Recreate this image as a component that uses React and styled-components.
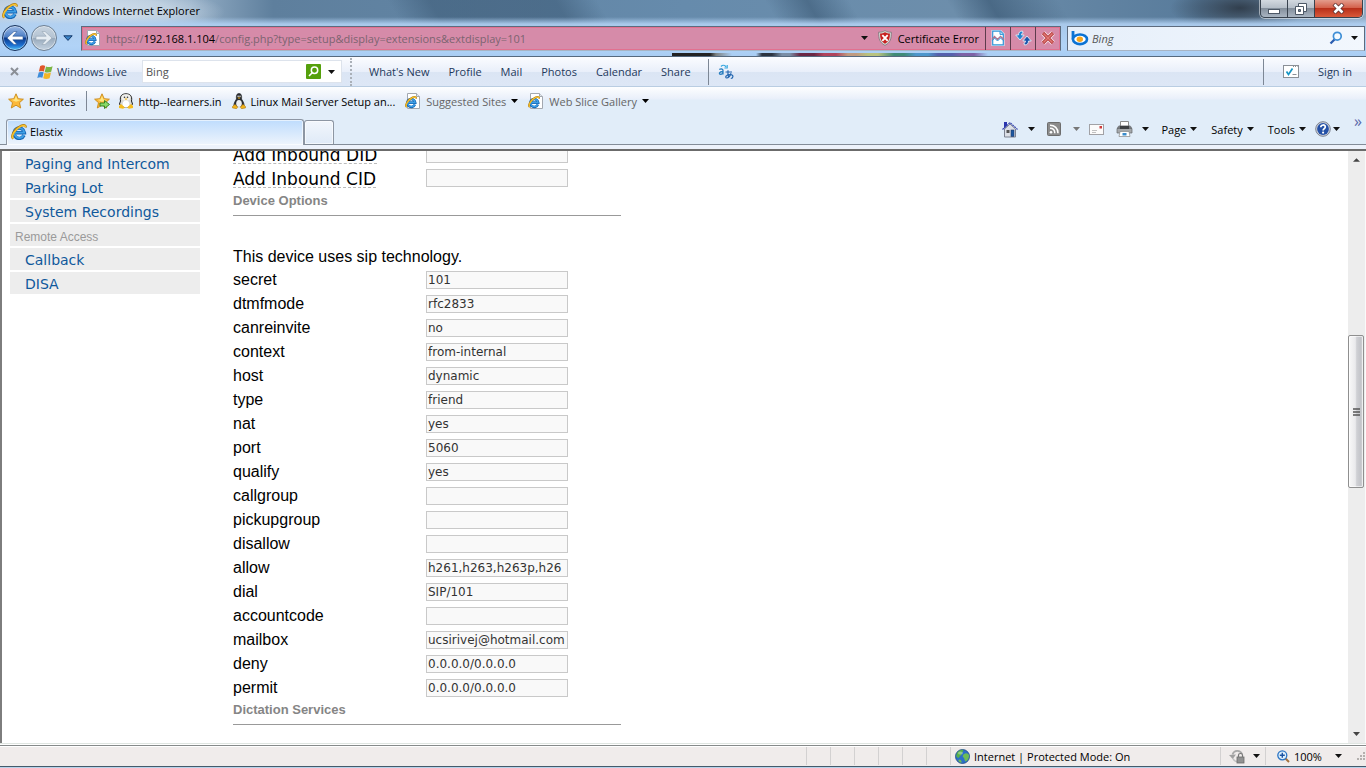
import React from "react";
import styled, { createGlobalStyle, css } from "styled-components";

const ui = '"Open Sans", "Noto Sans", sans-serif';
const verdana = '"DejaVu Sans", Verdana, sans-serif';
const arial = '"Liberation Sans", Arial, sans-serif';

const GlobalStyle = createGlobalStyle`
  *, *::before, *::after { box-sizing: border-box; }
  html, body { margin: 0; padding: 0; }
  body { background: #fff; font-family: ${ui}; font-size: 11px; color: #000; }
  button, input { font: inherit; color: inherit; }
  a { color: inherit; text-decoration: none; }
  svg { display: block; flex: none; }
`;

const Window = styled.div`
  display: flex;
  flex-direction: column;
  height: 100vh;
  overflow: hidden;
  white-space: nowrap;
`;

/* ---------- window frame ---------- */

const Glass = styled.header`
  flex: none;
  height: 57px;
  border-bottom: 1px solid #56697e;
  background:
    linear-gradient(90deg, #222 0 38px, #7c8080 44px, transparent 60px 84px, #2c3440 90px 100px, #7a8ea6 110px 118px, #6b2744 128px 142px, #b0435c 152px 164px, #c09a80 176px 184px, #b8c27e 196px 206px, #3f8a76 222px 232px, #4d96cc 244px 256px, #5560ac 266px 280px, #7d62a6 290px 302px, transparent 316px) 672px 53px / 320px 3px no-repeat,
    linear-gradient(180deg, rgba(176, 208, 242, 0) 0 17px, rgba(176, 208, 242, 0.9) 24px, #b1d3f7 46px, #a9cdf3 56px),
    radial-gradient(ellipse 130px 26px at 95px 12px, rgba(215, 228, 240, 0.95), rgba(215, 228, 240, 0.6) 60%, transparent),
    radial-gradient(ellipse 70px 24px at 1240px 8px, rgba(40, 50, 62, 0.85), transparent),
    linear-gradient(60deg, transparent 0 30%, rgba(58, 88, 116, 0.55) 33% 42%, transparent 45% 57%, rgba(58, 88, 116, 0.6) 60%, transparent 63% 70%, rgba(52, 82, 110, 0.6) 73%, transparent 78%),
    linear-gradient(90deg, #b7c9da 0, #93adc5 14%, #5e7f9d 20%, #668bac 50%, #6d8eab 70%, #587b9b 88%, #8fa9c2 100%);
`;

const TitleBar = styled.div`
  display: flex;
  align-items: flex-start;
  justify-content: space-between;
  height: 22px;
  padding-left: 2px;
`;

const Title = styled.h1`
  display: flex;
  align-items: center;
  gap: 3px;
  height: 21px;
  margin: 0;
  font-size: 11px;
  font-weight: 400;
`;

const WindowButtons = styled.div`
  display: flex;
  height: 18px;
  margin-right: 3px;
  border: 1px solid #38424e;
  border-top: 0;
  border-radius: 0 0 5px 5px;
  overflow: hidden;
  box-shadow: 0 0 0 1px rgba(255, 255, 255, 0.5);
`;

const WindowButton = styled.button`
  display: flex;
  align-items: center;
  justify-content: center;
  width: ${(p) => (p.$close ? 47 : 27)}px;
  padding: 0;
  border: 0;
  border-right: ${(p) => (p.$close ? 0 : 1)}px solid #38424e;
  background: ${(p) =>
    p.$close
      ? "linear-gradient(#e39c8c 0, #d4624c 45%, #b8301a 50%, #d9593a 100%)"
      : "linear-gradient(#d3d9e0 0, #b6bfc9 45%, #848f9c 50%, #a9b5c2 100%)"};
`;

const NavRow = styled.div`
  display: flex;
  align-items: center;
  height: 32px;
  padding: 0 1px 0 2px;
`;

const RoundButton = styled.button`
  display: flex;
  align-items: center;
  justify-content: center;
  width: 26px;
  height: 26px;
  margin-right: 3px;
  padding: 0;
  border: 1px solid ${(p) => (p.$dim ? "#6d7f92" : "#16325c")};
  border-radius: 50%;
  box-shadow: inset 0 0 0 1px rgba(255, 255, 255, 0.45);
  background: ${(p) =>
    p.$dim
      ? "linear-gradient(#c8d4e0 0, #b4c3d2 48%, #97a9bb 50%, #c4d3e1 100%)"
      : "linear-gradient(#9cbbe6 0, #4a7cc4 46%, #0b3a8c 50%, #1c6fd0 80%, #4fc0f5 100%)"};
`;

const PlainButton = styled.button`
  display: flex;
  align-items: center;
  justify-content: center;
  gap: 4px;
  min-width: ${(p) => p.$width || 0}px;
  padding: 0;
  border: 0;
  background: none;
  color: ${(p) => p.$color || "inherit"};
`;

const field = css`
  display: flex;
  align-items: center;
  height: 25px;
  border: 1px solid #5d6b7e;
  border-bottom-color: #a7b4c4;
`;

const AddressBar = styled.div`
  ${field}
  flex: 1;
  min-width: 0;
  margin: 0 6px 0 5px;
  padding-left: 3px;
  background: #d68ba9;
  box-shadow: inset 0 0 0 1px #e2708f;
`;

const Url = styled.div`
  flex: 1;
  min-width: 0;
  margin-left: 5px;
  overflow: hidden;
  color: #7c6470;
  font-size: 11px;
  b { color: #000; font-weight: 400; }
`;

const AddressTool = styled.button`
  display: flex;
  align-items: center;
  justify-content: center;
  width: 25px;
  height: 23px;
  padding: 0;
  border: 0;
  border-left: 1px solid #5e3c4c;
  background: none;
`;

const CertError = styled(PlainButton)`
  gap: 6px;
  margin: 0 6px 0 10px;
`;

const SearchBox = styled.div`
  ${field}
  flex: none;
  width: 298px;
  padding: 0 2px 0 3px;
  background: linear-gradient(90deg, #e6effa, #f2f7fd);
`;

const SearchInput = styled.input`
  flex: 1;
  min-width: 0;
  padding: 0 3px;
  border: 0;
  outline: 0;
  background: none;
  color: #444;
  font-style: ${(p) => (p.$italic ? "italic" : "normal")};
  &::placeholder { color: #555; opacity: 1; }
`;

/* ---------- toolbars ---------- */

const LiveBar = styled.div`
  display: flex;
  flex: none;
  align-items: center;
  height: 30px;
  padding: 0 14px 0 9px;
  border-bottom: 1px solid #b9cde2;
  background: linear-gradient(#fbfcff 0, #e9effa 50%, #dbe5f4 51%, #dde7f6 100%);
  color: #1e395b;
`;

const LiveBrand = styled.a`
  display: flex;
  align-items: center;
  gap: 4px;
  width: 105px;
  margin-left: 17px;
`;

const LiveSearch = styled.div`
  display: flex;
  align-items: center;
  width: 200px;
  height: 23px;
  border: 1px solid #dde3ec;
  background: #fff;
`;

const Dots = styled.span`
  height: 28px;
  margin: 0 17px 0 8px;
  border-left: 2px dotted #aab0b8;
`;

const LiveLinks = styled.nav`
  display: flex;
  gap: 19px;
  margin-right: 17px;
`;

const Divider = styled.span`
  width: 1px;
  height: ${(p) => p.$height || 26}px;
  background: #7d8795;
`;

const Spacer = styled.span`
  flex: 1;
`;

const FavoritesBar = styled.div`
  display: flex;
  flex: none;
  align-items: center;
  height: 30px;
  padding: 0 0 2px 8px;
  background: linear-gradient(#fdfeff 0, #e9effa 12px, #e1edf9 13px);
`;

const FavoriteLink = styled.a`
  display: flex;
  align-items: center;
  gap: 5px;
  margin-right: 10px;
  color: ${(p) => (p.$soft ? "#666" : "#000")};
`;

const TabRow = styled.div`
  display: flex;
  flex: none;
  align-items: flex-end;
  height: 28px;
  padding-left: 6px;
  border-bottom: 1px solid #838c98;
  background: #e1edf9;
`;

const Tab = styled.button`
  display: flex;
  align-items: center;
  gap: 3px;
  width: ${(p) => (p.$blank ? 30 : 298)}px;
  height: ${(p) => (p.$blank ? 24 : 26)}px;
  margin-bottom: ${(p) => (p.$blank ? 0 : -1)}px;
  padding: 0 4px 2px;
  border: 1px solid #8d96a3;
  border-bottom: 0;
  border-radius: 3px 3px 0 0;
  background: ${(p) => (p.$blank ? "linear-gradient(#f2f6fc, #dfeaf7)" : "linear-gradient(#bedcfd 0, #eef4fc 100%)")};
  box-shadow: inset 0 0 0 1px rgba(255, 255, 255, 0.6);
`;

const Commands = styled.div`
  display: flex;
  align-items: center;
  height: 28px;
  padding: 0 4px 2px 0;
`;

const Command = styled(PlainButton)`
  margin-right: ${(p) => p.$after || 14}px;
  gap: ${(p) => p.$gap || 4}px;
`;

const More = styled.button`
  align-self: flex-start;
  padding: 0;
  border: 0;
  background: none;
  color: #5a68a8;
  font-size: 16px;
  line-height: 10px;
`;

const PageEdge = styled.div`
  flex: none;
  height: 6px;
  border-bottom: 2px solid #6b6b6b;
  background: #edf2fb;
`;

/* ---------- page ---------- */

const Viewport = styled.div`
  display: flex;
  flex: 1;
  min-height: 0;
  border-left: 2px solid #7d7d7d;
  background: #fff;
`;

const Page = styled.main`
  display: flex;
  flex: 1;
  align-items: flex-start;
  min-width: 0;
  overflow: hidden;
`;

const Menu = styled.nav`
  display: flex;
  flex: none;
  flex-direction: column;
  gap: 2px;
  width: 190px;
  margin: 1px 33px 0 8px;
`;

const MenuLink = styled.a`
  height: 22px;
  padding-left: 15px;
  background: #ededed;
  color: #10599c;
  font: 14px/24px ${verdana};
`;

const MenuTitle = styled.h2`
  height: 22px;
  margin: 0;
  padding-left: 5px;
  background: #ededed;
  color: #9a9a9a;
  font: 12px/26px ${arial};
`;

/* The page is scrolled part of the way down its first visible row. */
const Form = styled.form`
  width: 388px;
  margin-top: -9px;
`;

const Row = styled.div`
  display: grid;
  grid-template-columns: 193px 142px;
  align-items: center;
  height: 24px;
`;

const Label = styled.label`
  align-self: start;
  font: 16px/26px ${arial};
`;

const HintLabel = styled.label`
  justify-self: start;
  height: 20px;
  border-bottom: 1px dashed #bbb;
  font: 17px/22px ${verdana};
`;

const TextInput = styled.input`
  width: 142px;
  height: 18px;
  padding: 0 1px;
  border: 1px solid #c9c9c9;
  outline: 0;
  background: #f9f9f9;
  color: #333;
  font: 12px/16px ${verdana};
`;

const Section = styled.h3`
  height: 26px;
  margin: 0;
  border-bottom: 1px solid #999;
  color: #858585;
  font: bold 13px/21px ${arial};
`;

const Note = styled.p`
  margin: 30px 0 0;
  font: 16px/21px ${arial};
`;

const ScrollBar = styled.div`
  display: flex;
  flex: none;
  flex-direction: column;
  width: 18px;
  padding-right: 1px;
  border-right: 1px solid #fafafa;
  background: #ededed;
`;

const ScrollArrow = styled.button`
  display: flex;
  flex: none;
  align-items: center;
  justify-content: center;
  height: 17px;
  padding: 0;
  border: 0;
  background: none;
`;

const Track = styled.div`
  flex: ${(p) => p.$part} 0 0;
`;

const Thumb = styled.div`
  display: flex;
  flex: 151 0 0;
  align-items: center;
  justify-content: center;
  border: 1px solid #8f8f8f;
  border-radius: 2px;
  background: linear-gradient(90deg, #f8f8f8 0, #eaeaec 45%, #cfd0d4 55%, #c3c4c9 85%, #dcdcdf 100%);
  box-shadow: inset 0 0 0 1px rgba(255, 255, 255, 0.6);
`;

/* ---------- status bar ---------- */

const StatusBar = styled.footer`
  display: flex;
  flex: none;
  justify-content: flex-end;
  height: 25px;
  border-top: 1px solid #dfe5e1;
  border-bottom: 1px solid #b8d3ea;
  background: linear-gradient(#fff 0 1px, #868a8a 1px 2px, #fff 2px 3px, #f0eceb 3px 22px, #445a6b 22px);
`;

const StatusCell = styled.div`
  display: flex;
  align-items: center;
  gap: 4px;
  width: ${(p) => p.$width}px;
  height: 18px;
  margin-top: 3px;
  padding-left: ${(p) => p.$pad || 0}px;
  border-left: 1px solid #d3d1d1;
`;

/* ---------- icons ---------- */

const Caret = ({ color = "#111", size = 7 }) => (
  <svg width={size} height="4" viewBox="0 0 8 4" preserveAspectRatio="none">
    <path d="M0 0h8L4 4z" fill={color} />
  </svg>
);

const IeMark = () => (
  <g fill="none">
    <path d="M13 11.300A5.200 5.200 0 1 1 13.400 8.700H4.500" stroke="#1465b4" strokeWidth="3.400" />
    <path d="M12.800 11A4.900 4.900 0 1 1 13.200 8.600H4.500" stroke="#3d9fe6" strokeWidth="1.900" />
    <path d="M2.300 14.700C-1 12.500 4 4.500 10 1.800c3-1.300 5.200-.8 4.600 1.700" stroke="#b27c0c" strokeWidth="2.200" />
    <path d="M2.300 14.500C-.5 12.300 4.300 4.800 10 2.100c2.700-1.200 4.700-.8 4.300 1" stroke="#f6c330" strokeWidth="1.500" />
  </g>
);

const IeIcon = () => (
  <svg width="16" height="16" viewBox="0 0 16 16"><IeMark /></svg>
);

const IePage = () => (
  <svg width="16" height="16" viewBox="0 0 16 16">
    <path d="M2.500.5h9l3 3v12h-12z" fill="#fff" stroke="#a3a8b0" />
    <path d="M11.500.5v3h3" fill="#e2e6ec" stroke="#a3a8b0" />
    <g transform="translate(0 3) scale(.76)"><IeMark /></g>
  </svg>
);

const Arrow = ({ flip, dim }) => (
  <svg width="18" height="16" viewBox="0 0 18 16">
    <path
      d={flip ? "M17 8l-7-6.500H7l4.200 4.700H1v3.600h10.200L7 14.500h3z" : "M1 8l7-6.500h3L6.800 6.200H17v3.600H6.800L11 14.500H8z"}
      fill={dim ? "#e6edf3" : "#fff"}
      stroke={dim ? "#93a3b2" : "#2a5794"}
      strokeWidth=".6"
    />
  </svg>
);

const Shield = () => (
  <svg width="14" height="16" viewBox="0 0 14 16">
    <path d="M7 .6c2 1.300 4 1.600 6.400 1.600 0 6-.6 10.300-6.400 13.200C1.200 12.500.6 8.200.6 2.200 3 2.200 5 1.900 7 .6z" fill="#d3d6d3" stroke="#7d7478" strokeWidth=".8" />
    <path d="M7 2.300c1.500.9 3 1.200 4.900 1.300 0 4.400-.6 8-4.900 10.200C2.700 11.600 2.100 8 2.100 3.600 4 3.500 5.500 3.200 7 2.300z" fill="#c7201f" />
    <path d="M4.300 5.200l5.400 5.600M9.700 5.200l-5.400 5.600" stroke="#fff" strokeWidth="1.900" />
  </svg>
);

const BrokenPage = () => (
  <svg width="14" height="16" viewBox="0 0 14 16">
    <path d="M.5 0H10l3.500 3.500V16H.5z" fill="#e6f2fb" />
    <path d="M1.700 1.200h7.800l2.800 2.800v10.800H1.700z" fill="#fff" stroke="#3095d8" strokeWidth="1.200" />
    <path d="M9 1.200v3.200h3.300" fill="#c3e3f8" stroke="#3095d8" />
    <path d="M1 9.500l2.500-3 3 3 3-3 3.500 3" fill="none" stroke="#b0758f" strokeWidth="1.400" />
    <path d="M1 11l2.500-3 3 3 3-3 3.500 3" fill="none" stroke="#3095d8" />
  </svg>
);

const Refresh = () => (
  <svg width="17" height="16" viewBox="0 0 17 16">
    <path d="M7.500 1C4.800 1 3.500 2.600 3.500 5H.7L5 10l4.200-5H6.500c0-1.200.3-1.800 1.600-2z" fill="#2382cf" stroke="#dcebf8" strokeWidth=".9" />
    <path d="M9.500 15c2.700 0 4-1.600 4-4h2.800L12 6l-4.200 5h2.700c0 1.200-.3 1.800-1.600 2z" fill="#1c55ac" stroke="#dcebf8" strokeWidth=".9" />
  </svg>
);

const Stop = () => (
  <svg width="14" height="14" viewBox="0 0 14 14">
    <path d="M2 2l10 10M12 2L2 12" stroke="#f7e6ea" strokeWidth="5" />
    <path d="M2 2l10 10M12 2L2 12" stroke="#b5393c" strokeWidth="3.200" />
    <path d="M2.500 2.500l9 9M11.500 2.500l-9 9" stroke="#e07a74" strokeWidth="1.500" />
  </svg>
);

const BingMark = () => (
  <svg width="18" height="16" viewBox="0 0 18 16">
    <path d="M2 1v8.500" stroke="#0a72d4" strokeWidth="2.800" fill="none" />
    <ellipse cx="9" cy="9.300" rx="7" ry="4.800" fill="#fff" stroke="#0a72d4" strokeWidth="2.600" />
    <ellipse cx="8.800" cy="9.300" rx="3.200" ry="2.700" fill="#f7a51c" />
  </svg>
);

const Magnifier = () => (
  <svg width="14" height="14" viewBox="0 0 14 14" fill="none">
    <path d="M6 8L1.500 12.500" stroke="#2a5db0" strokeWidth="2.300" />
    <circle cx="8.300" cy="5.200" r="3.900" stroke="#3d8ed6" strokeWidth="1.700" fill="#f4faff" />
  </svg>
);

const WindowsFlag = () => (
  <svg width="16" height="16" viewBox="0 0 16 16">
    <path d="M3.200 1.900C5.200.9 6.800 1.100 8.200 1.900L6.900 7.500C5.300 6.700 3.900 6.700 1.900 7.600z" fill="#e0562a" />
    <path d="M9 2.400c1.900.9 4 .9 6.600-.2l-1.400 5.600c-2.200 1-4.400 1.100-6.500.1z" fill="#7cb542" />
    <path d="M1.700 8.400c2-.9 3.500-.9 5-.1L5.400 13.800C3.800 13 2.200 13.100.3 14z" fill="#3d8cd9" />
    <path d="M7.500 8.700c2 1 4.200.9 6.500-.1l-1.400 5.600c-2.200 1-4.400 1-6.400.1z" fill="#f3b526" />
  </svg>
);

const GreenSearch = () => (
  <svg width="15" height="15" viewBox="0 0 15 15">
    <rect width="15" height="15" rx="1" fill="#55a00c" />
    <circle cx="8.500" cy="6.300" r="3.200" fill="none" stroke="#fff" strokeWidth="1.500" />
    <path d="M6.200 8.700L3 12" stroke="#fff" strokeWidth="1.600" />
  </svg>
);

const Translate = () => (
  <svg width="16" height="16" viewBox="0 0 16 16" fill="none">
    <path d="M1.300 5.600C2.500 4.700 5 4.600 5 6.500V10.500M5 7.500C1 7.400.7 10.300 2.500 10.300 4 10.300 5 9 5 8" stroke="#2a7fc0" strokeWidth="1.300" />
    <path d="M3 2.500c1.500-1.800 4-1.700 5 .5M9.200 1v3H6.400" stroke="#38a8e0" strokeWidth="1.200" />
    <path d="M7.500 8h6.500M10 6.300c-.3 3 0 5.700.8 7.500M13 9.300c-1 3-2.300 4.700-4.300 4.700-2-.2-.8-3.500 3.300-3.500 4.500.3 3 4 .8 4" stroke="#2466b0" strokeWidth="1.200" />
  </svg>
);

const CheckCard = () => (
  <svg width="16" height="13" viewBox="0 0 16 13">
    <rect x=".5" y=".5" width="15" height="12" fill="#fff" stroke="#8a8f96" />
    <path d="M10 1.500h4.500" stroke="#8a8f96" strokeDasharray="1 1" />
    <path d="M3.500 6.500l2 3 4-6" fill="none" stroke="#1795c4" strokeWidth="1.700" />
    <path d="M9.500 9.500h4" stroke="#8a8f96" />
  </svg>
);

const Star = ({ plus }) => (
  <svg width="16" height="16" viewBox="0 0 16 16">
    <path d="M8 .8l2.200 4.900 5.200.5-3.900 3.500 1.200 5.300L8 12.200 3.300 15l1.200-5.300L.6 6.200l5.200-.5z" fill="#fcb93a" stroke="#c98a17" strokeWidth=".9" />
    <path d="M8 2.800l1.400 3.700 3.600.4-5 1.800-4.500-1.900 3-.4z" fill="#ffe680" />
    {plus && <path d="M6 10h4.500V7.500l5 4-5 4V13H6z" fill="#8ada68" stroke="#2a7a1c" strokeWidth=".9" />}
  </svg>
);

const LearnerPenguin = () => (
  <svg width="16" height="16" viewBox="0 0 16 16">
    <path d="M2.500 8C1.500 3 4 .8 8 .8S14.500 3 13.500 8l1 3-2 3h-9l-2-3z" fill="#d8d8d4" stroke="#1c1c1c" />
    <ellipse cx="8" cy="4.500" rx="4.300" ry="3.200" fill="#efefec" />
    <ellipse cx="8" cy="11" rx="3.300" ry="3.500" fill="#fff" />
    <circle cx="6.500" cy="4.200" r=".8" fill="#333" />
    <circle cx="9.500" cy="4.200" r=".8" fill="#333" />
    <path d="M6.500 5.500h3L8 7.300z" fill="#f1b117" />
    <path d="M1 13l2-2 4 3.500-2 1.300-4-.8zM15 13l-2-2-4 3.500 2 1.300 4-.8z" fill="#f6bd1d" />
  </svg>
);

const Penguin = () => (
  <svg width="14" height="16" viewBox="0 0 14 16">
    <path d="M4.500 6C4 2 5 .6 7 .6S10 2 9.500 6c2 3 3 5 2.500 7.500H2C1.500 11 2.500 9 4.500 6z" fill="#2b2e33" stroke="#15171a" strokeWidth=".6" />
    <ellipse cx="7" cy="10.500" rx="2.800" ry="3.600" fill="#eceff2" />
    <circle cx="6.100" cy="3.300" r=".7" fill="#fff" />
    <circle cx="8" cy="3.300" r=".7" fill="#fff" />
    <path d="M5.500 4.500h3L7 6z" fill="#f1b117" />
    <path d="M.5 13.500L3 11.300l2.800 3-1.300 1.400-4-.8zM13.500 13.500L11 11.300l-2.800 3 1.300 1.400 4-.8z" fill="#f3b41b" stroke="#9a6a08" strokeWidth=".5" />
  </svg>
);

const Home = () => (
  <svg width="16" height="17" viewBox="0 0 16 17">
    <path d="M2 1h3v4L2 8z" fill="#2a35ae" />
    <path d="M2.500 8L8 3l5.500 5v8h-11z" fill="#dcdfe6" stroke="#7c8290" />
    <path d="M.5 8.500L8 1.500l7.500 7" fill="none" stroke="#3b48b0" strokeWidth="1.200" strokeDasharray="2 .7" />
    <rect x="4.500" y="9" width="3" height="3" fill="#555" />
    <rect x="9" y="9" width="3" height="6.500" fill="#1c57a2" stroke="#223a66" strokeWidth=".6" />
  </svg>
);

const Rss = () => (
  <svg width="14" height="14" viewBox="0 0 14 14" fill="none">
    <rect x=".5" y=".5" width="13" height="13" rx="1" fill="#8b8b8b" stroke="#6d6d6d" />
    <circle cx="4" cy="10.200" r="1.300" fill="#fff" />
    <path d="M3 6.300c3 0 4.800 2 4.800 4.900M3 3.200c4.700 0 8 3.200 8 8" stroke="#fff" strokeWidth="1.500" />
  </svg>
);

const Mail = () => (
  <svg width="15" height="11" viewBox="0 0 15 11">
    <rect x=".5" y=".5" width="14" height="10" fill="#fbfbfb" stroke="#a1a1a5" />
    <rect x="10.500" y="2" width="2.500" height="2.500" fill="#cf3a3a" />
    <path d="M3 6.500h5M3 8.500h4" stroke="#c1c1c1" />
  </svg>
);

const Printer = () => (
  <svg width="17" height="16" viewBox="0 0 17 16">
    <path d="M4.500.5h8v6h-8z" fill="#fff" stroke="#8d8d8d" />
    <path d="M1 6.500l2-2h11l2 2v5H1z" fill="#76797d" />
    <path d="M1 7.500h15V12H1z" fill="#a5a8ab" stroke="#65686b" strokeWidth=".7" />
    <path d="M4 5h9v3H4z" fill="#3d4043" />
    <path d="M4 10.500h9l1 5H3z" fill="#fff" stroke="#888" strokeWidth=".7" />
    <path d="M6.500 12h4v2.500h-4z" fill="#3b8ccc" />
  </svg>
);

const Help = () => (
  <svg width="16" height="16" viewBox="0 0 16 16">
    <circle cx="8" cy="8" r="7.300" fill="#cfd4de" stroke="#7c8190" />
    <circle cx="8" cy="8" r="5.900" fill="#2450a6" />
    <path d="M5.800 6.300C5.700 3.200 10.500 3.300 10.300 6c-.1 1.700-2.200 1.700-2.200 3.600" fill="none" stroke="#fff" strokeWidth="1.700" />
    <circle cx="8.100" cy="11.600" r="1.100" fill="#fff" />
  </svg>
);

const Globe = () => (
  <svg width="15" height="15" viewBox="0 0 15 15">
    <circle cx="7.500" cy="7.500" r="7" fill="#2c6fc9" stroke="#1d4a80" strokeWidth=".8" />
    <path d="M2 4c2-3 5-3.500 6-3 1 1.500-1 2-1 3.500S4.500 7 4 8.500 2 8 1.200 7z" fill="#57b04a" />
    <path d="M9 5c2-1.500 4-.5 5 1 .3 3-1 5-3 6.500-2-.5-1-3-2.500-4S8 5.700 9 5zM4 10.500c2 0 3 1.500 2.500 3.300-1.500-.3-2.500-1-3.200-2z" fill="#6ebc55" />
    <ellipse cx="5.500" cy="4" rx="2.500" ry="1.500" fill="#fff" opacity=".35" />
  </svg>
);

const PrivacyLock = () => (
  <svg width="16" height="15" viewBox="0 0 16 15" fill="none">
    <path d="M3.500 5.500C5 1 11 .5 13 5" stroke="#a9a9a9" strokeWidth="1.800" />
    <path d="M0 6l3.700 4L7 5.500z" fill="#a0a0a0" />
    <path d="M4 9.500C5 12 7 12.500 8 12.500" stroke="#c1c1c1" strokeWidth="1.500" />
    <rect x="8" y="8" width="7" height="6" fill="#929292" stroke="#6c6c6c" strokeWidth=".8" />
    <path d="M9.500 8V6c0-2 4-2 4 0v2" stroke="#777" strokeWidth="1.200" />
  </svg>
);

const ZoomIcon = () => (
  <svg width="13" height="13" viewBox="0 0 13 13">
    <path d="M8 8l4 4" stroke="#a5713c" strokeWidth="2" />
    <circle cx="5.300" cy="5.300" r="4.500" fill="#dff0fc" stroke="#2b74c4" strokeWidth="1.300" />
    <path d="M2.800 5.300h5M5.300 2.800v5" stroke="#1c54a4" strokeWidth="1.400" />
  </svg>
);

const Grip = () => (
  <svg width="10" height="10" viewBox="0 0 10 10" fill="#b4b0ae">
    <path d="M7 1h2v2H7zM4 4h2v2H4zM7 4h2v2H7zM1 7h2v2H1zM4 7h2v2H4zM7 7h2v2H7z" />
  </svg>
);

/* ---------- data ---------- */

const menu = [
  ["Paging and Intercom"],
  ["Parking Lot"],
  ["System Recordings"],
  ["Remote Access", true],
  ["Callback"],
  ["DISA"],
];

const inbound = ["Add Inbound DID", "Add Inbound CID"];

const device = [
  ["secret", "101"],
  ["dtmfmode", "rfc2833"],
  ["canreinvite", "no"],
  ["context", "from-internal"],
  ["host", "dynamic"],
  ["type", "friend"],
  ["nat", "yes"],
  ["port", "5060"],
  ["qualify", "yes"],
  ["callgroup", ""],
  ["pickupgroup", ""],
  ["disallow", ""],
  ["allow", "h261,h263,h263p,h26"],
  ["dial", "SIP/101"],
  ["accountcode", ""],
  ["mailbox", "ucsirivej@hotmail.com"],
  ["deny", "0.0.0.0/0.0.0.0"],
  ["permit", "0.0.0.0/0.0.0.0"],
];

const liveLinks = ["What's New", "Profile", "Mail", "Photos", "Calendar", "Share"];

/* ---------- app ---------- */

export default function App() {
  return (
    <Window>
      <GlobalStyle />
      <Glass>
        <TitleBar>
          <Title><IeIcon />Elastix - Windows Internet Explorer</Title>
          <WindowButtons>
            <WindowButton aria-label="Minimize">
              <svg width="12" height="12" viewBox="0 0 12 12"><rect x=".5" y="6.500" width="11" height="4" fill="#fff" stroke="#4d5866" /></svg>
            </WindowButton>
            <WindowButton aria-label="Restore">
              <svg width="12" height="12" viewBox="0 0 12 12">
                <path d="M3.500.5h8v8h-8z" fill="#fff" stroke="#4d5866" />
                <path d="M.5 3.500h8v8h-8z" fill="#fff" stroke="#4d5866" />
                <path d="M3.500 6.500h2v2h-2z" fill="#7b8998" stroke="#4d5866" />
              </svg>
            </WindowButton>
            <WindowButton $close aria-label="Close">
              <svg width="13" height="11" viewBox="0 0 13 11">
                <path d="M2 1l9 9M11 1l-9 9" stroke="#5c3030" strokeWidth="4.200" />
                <path d="M2.500 1.500l8 8M10.500 1.500l-8 8" stroke="#fff" strokeWidth="2.600" />
              </svg>
            </WindowButton>
          </WindowButtons>
        </TitleBar>
        <NavRow>
          <RoundButton aria-label="Back"><Arrow /></RoundButton>
          <RoundButton $dim aria-label="Forward"><Arrow flip dim /></RoundButton>
          <PlainButton $width={16} aria-label="Recent pages">
            <svg width="10" height="6" viewBox="0 0 10 6"><path d="M.8.8h8.400L5 5.400z" fill="#3a84c8" stroke="#163b6c" /></svg>
          </PlainButton>
          <AddressBar>
            <IePage />
            <Url role="textbox" aria-label="Address">
              https://<b>192.168.1.104</b>/config.php?type=setup&amp;display=extensions&amp;extdisplay=101
            </Url>
            <PlainButton aria-label="Address history"><Caret /></PlainButton>
            <CertError><Shield />Certificate Error</CertError>
            <AddressTool aria-label="Compatibility view"><BrokenPage /></AddressTool>
            <AddressTool aria-label="Refresh"><Refresh /></AddressTool>
            <AddressTool aria-label="Stop"><Stop /></AddressTool>
          </AddressBar>
          <SearchBox>
            <BingMark />
            <SearchInput $italic placeholder="Bing" aria-label="Search the web" />
            <PlainButton $width={20} aria-label="Search"><Magnifier /></PlainButton>
            <PlainButton $width={16} aria-label="Search options"><Caret /></PlainButton>
          </SearchBox>
        </NavRow>
      </Glass>

      <LiveBar>
        <PlainButton $width={11} aria-label="Close toolbar">
          <svg width="9" height="9" viewBox="0 0 9 9"><path d="M1 1l7 7M8 1L1 8" stroke="#8b8f96" strokeWidth="2" /></svg>
        </PlainButton>
        <LiveBrand href="#live"><WindowsFlag />Windows Live</LiveBrand>
        <LiveSearch>
          <SearchInput placeholder="Bing" aria-label="Search Bing" />
          <PlainButton aria-label="Search"><GreenSearch /></PlainButton>
          <PlainButton $width={20} aria-label="Search options"><Caret /></PlainButton>
        </LiveSearch>
        <Dots />
        <LiveLinks>
          {liveLinks.map((t) => <a href="#live" key={t}>{t}</a>)}
        </LiveLinks>
        <Divider />
        <PlainButton $width={34} aria-label="Translate"><Translate /></PlainButton>
        <Spacer />
        <Divider />
        <PlainButton $width={54} aria-label="Tasks"><CheckCard /></PlainButton>
        <a href="#signin">Sign in</a>
      </LiveBar>

      <FavoritesBar>
        <FavoriteLink as="a" href="#favorites"><Star />Favorites</FavoriteLink>
        <Divider $height={20} />
        <PlainButton $width={31} aria-label="Add to favorites"><Star plus /></PlainButton>
        <FavoriteLink href="#f1"><LearnerPenguin />http--learners.in</FavoriteLink>
        <FavoriteLink href="#f2"><Penguin />Linux Mail Server Setup an...</FavoriteLink>
        <FavoriteLink href="#f3" $soft><IePage />Suggested Sites<Caret color="#000" /></FavoriteLink>
        <FavoriteLink href="#f4" $soft><IePage />Web Slice Gallery<Caret color="#000" /></FavoriteLink>
      </FavoritesBar>

      <TabRow>
        <Tab><IeIcon />Elastix</Tab>
        <Tab $blank aria-label="New tab" />
        <Spacer />
        <Commands>
          <Command $gap={10} $after={12} aria-label="Home"><Home /><Caret /></Command>
          <Command $gap={12} $after={9} aria-label="Feeds"><Rss /><Caret color="#777" /></Command>
          <Command $after={12} aria-label="Read mail"><Mail /></Command>
          <Command $gap={9} $after={12} aria-label="Print"><Printer /><Caret /></Command>
          <Command>Page<Caret /></Command>
          <Command>Safety<Caret /></Command>
          <Command $after={9}>Tools<Caret /></Command>
          <Command $gap={2} aria-label="Help"><Help /><Caret /></Command>
          <More aria-label="More commands">»</More>
        </Commands>
      </TabRow>
      <PageEdge />

      <Viewport>
        <Page>
          <Menu>
            {menu.map(([text, title]) =>
              title ? <MenuTitle key={text}>{text}</MenuTitle> : <MenuLink href="#menu" key={text}>{text}</MenuLink>
            )}
          </Menu>
          <Form onSubmit={(e) => e.preventDefault()}>
            {inbound.map((name) => (
              <Row key={name}>
                <HintLabel htmlFor={name}>{name}</HintLabel>
                <TextInput id={name} />
              </Row>
            ))}
            <Section>Device Options</Section>
            <Note>This device uses sip technology.</Note>
            {device.map(([name, value]) => (
              <Row key={name}>
                <Label htmlFor={name}>{name}</Label>
                <TextInput id={name} defaultValue={value} />
              </Row>
            ))}
            <Section>Dictation Services</Section>
          </Form>
        </Page>
        <ScrollBar>
          <ScrollArrow aria-label="Scroll up">
            <svg width="7" height="4" viewBox="0 0 8 4"><path d="M0 4h8L4 0z" fill="#444" /></svg>
          </ScrollArrow>
          <Track $part={168} />
          <Thumb>
            <svg width="7" height="8" viewBox="0 0 7 8"><path d="M0 1h7M0 4h7M0 7h7" stroke="#555" strokeWidth="1.500" /></svg>
          </Thumb>
          <Track $part={239} />
          <ScrollArrow aria-label="Scroll down"><Caret color="#444" /></ScrollArrow>
        </ScrollBar>
      </Viewport>

      <StatusBar>
        {[0, 1, 2, 3, 4, 5].map((n) => <StatusCell $width={24} key={n} />)}
        <StatusCell $width={270} $pad={4}><Globe />Internet | Protected Mode: On</StatusCell>
        <StatusCell $width={45} $pad={8}><PrivacyLock /><PlainButton $width={14} aria-label="Privacy options"><Caret /></PlainButton></StatusCell>
        <StatusCell $width={101} $pad={11}>
          <ZoomIcon />100%
          <Spacer />
          <PlainButton aria-label="Zoom level"><Caret /></PlainButton>
          <Spacer />
          <Grip />
        </StatusCell>
      </StatusBar>
    </Window>
  );
}
